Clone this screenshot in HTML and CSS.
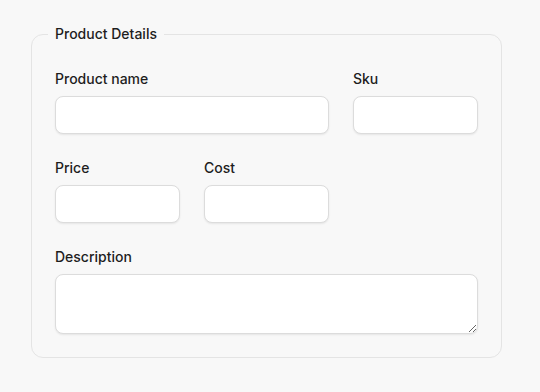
FILE: index.html
```html
<!DOCTYPE html>
<html lang="en">
  <head>
    <meta charset="UTF-8" />
    <meta name="viewport" content="width=device-width, initial-scale=1.0" />
    <title>Product Details</title>
    <link rel="stylesheet" href="styles.css">
  </head>
  <body>
    <form class="product-form">
      <fieldset class="details">
        <legend>Product Details</legend>
        <div class="field-grid">
          <div class="field span-2">
            <label for="name">Product name</label>
            <input type="text" id="name" />
          </div>
          <div class="field">
            <label for="sku">Sku</label>
            <input type="text" id="sku" />
          </div>
          <div class="field">
            <label for="price">Price</label>
            <input type="text" id="price" />
          </div>
          <div class="field">
            <label for="cost">Cost</label>
            <input type="text" id="cost" />
          </div>
          <div class="field span-3">
            <label for="description">Description</label>
            <textarea id="description"></textarea>
          </div>
        </div>
      </fieldset>
    </form>
  </body>
</html>
```

FILE: styles.css
```css
* {
  margin: 0;
  padding: 0;
  box-sizing: border-box;
}
body {
  font-family: Inter, "Liberation Sans", sans-serif;
  font-size: 14px;
  font-weight: 500;
  line-height: 20px;
  background-color: #f8f8f8;
  color: #1e1e1e;
  padding: 24px 38px 0 31px;
}
.details {
  border: 1px solid #e4e4e4;
  border-radius: 12px;
  padding: 25px 23px 23px;
}
.details legend {
  margin-left: -7px;
  padding: 0 7px;
}
.field-grid {
  display: grid;
  grid-template-columns: repeat(3, 125px);
  gap: 24px;
}
.field {
  display: flex;
  flex-direction: column;
  gap: 7px;
}
.span-2 {
  grid-column: span 2;
}
.span-3 {
  grid-column: span 3;
}
.field input,
.field textarea {
  background: #fff;
  border: 1px solid #dcdcdc;
  border-radius: 8px;
  box-shadow: 0 1px 2px rgba(0, 0, 0, 0.08);
  font: inherit;
  outline: none;
}
.field input {
  height: 38px;
  padding: 0 10px;
}
.field textarea {
  height: 60px;
  padding: 8px 10px;
  resize: vertical;
  display: block;
}
```
